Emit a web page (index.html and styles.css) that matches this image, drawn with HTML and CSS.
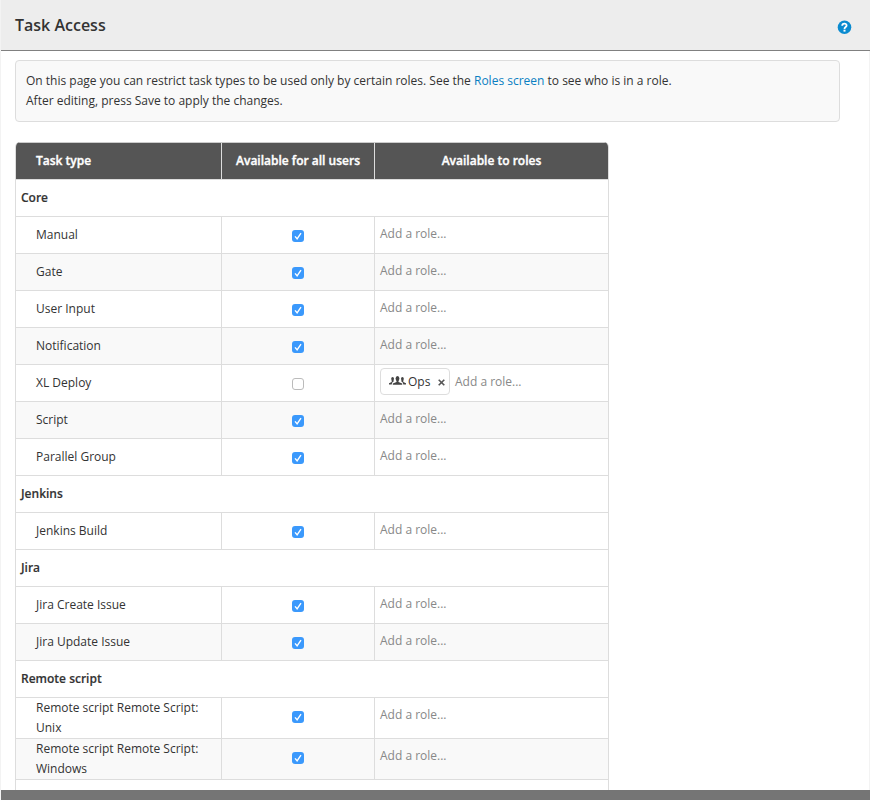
FILE: index.html
```html
<!DOCTYPE html>
<html lang="en">
<head>
<meta charset="utf-8">
<title>Task Access</title>
<link rel="stylesheet" href="styles.css">
</head>
<body>
<div class="page">
  <header class="header">
    <h1>Task Access</h1>
    <svg class="help" viewBox="0 0 15 15"><circle cx="7.5" cy="7.3" r="6.8" fill="#0a8bd0"/><path d="M5.2 5.8C5.2 2.9 9.8 3 9.6 5.6C9.5 7.1 7.5 7 7.5 8.9" fill="none" stroke="#fff" stroke-width="1.8"/><rect x="6.5" y="9.7" width="2" height="1.9" fill="#fff"/></svg>
  </header>
  <main class="content">
    <div class="info"><p>On this page you can restrict task types to be used only by certain roles. See the <a>Roles screen</a> to see who is in a role.</p><p>After editing, press Save to apply the changes.</p></div>
    <div class="table" id="table">
      <div class="row head"><div class="name">Task type</div><div class="all">Available for all users</div><div class="roles">Available to roles</div></div>
    </div>
  </main>
  <footer class="footer"></footer>
</div>
<script src="tasks.js"></script>
</body>
</html>
```
FILE: styles.css
```css
* { box-sizing: border-box; }
body { margin: 0; background: #fff; color: #333; font: 12px/20px "Open Sans", sans-serif; }
.page { height: 800px; display: flex; flex-direction: column; overflow: hidden; border-left: 1px solid #f3f3f3; }
.header { height: 51px; flex: none; display: flex; align-items: center; justify-content: space-between; padding: 2px 18px 0 15px; margin-left: -1px; background: #ededed; border-bottom: 1px solid #808080; }
h1 { margin: 0 0 2px; font-size: 16px; line-height: 22px; font-weight: 600; }
.help { width: 15px; height: 15px; margin-top: 2px; }
.content { flex: 1; min-height: 0; overflow: hidden; padding: 9px 29px 0 14px; border-right: 1px solid #f3f3f3; }
.info { height: 62px; padding: 10px; background: #f9f9f9; border: 1px solid #ddd; border-radius: 4px; }
.info p { margin: 0; white-space: nowrap; }
.info a { color: #0a7fc2; }
.table { width: 594px; margin-top: 20px; border: solid #ddd; border-width: 0 1px; border-radius: 5px 5px 0 0; overflow: hidden; }
.row { display: grid; grid-template-columns: 205px 153px 234px; min-height: 37px; border-top: 1px solid #ddd; }
.row > div { display: flex; align-items: center; }
.name { padding: 0 20px; }
.all, .roles { border-left: 1px solid #ddd; }
.row > .all { justify-content: center; align-items: flex-start; padding-top: 13px; }
.row > .roles { align-items: flex-start; padding: 7px 5px 0; color: #888; }
.row > .restricted { padding-top: 3px; line-height: 27px; }
.head { background: #555; color: #fff; font-weight: 600; border-top-color: #ccc; -webkit-text-stroke: .35px #fff; }
.head > .all, .head > .roles { align-items: center; justify-content: center; color: #fff; padding: 0; }
.even { background: #f9f9f9; }
.group { display: flex; align-items: center; font-weight: 600; padding-left: 5px; -webkit-text-stroke: .15px #333; }
.check { width: 12px; height: 12px; border: 1px solid #bbb; border-radius: 3px; background: #fff; }
.checked { border: 0; background: #3b99fc; }
.check svg { display: block; width: 12px; height: 12px; }
.chip { display: flex; align-items: center; width: 70px; height: 27px; margin-right: 5px; padding-left: 8px; border: 1px solid #ddd; border-radius: 4px; background: #fff; color: #333; }
.people { width: 17px; height: 11px; margin: 0 2px 2px 0; }
.close { width: 7px; height: 7px; margin: 1px 0 0 8px; }
.footer { height: 10px; flex: none; background: #757575; margin-left: -1px; }
```
FILE: tasks.js
```js
const groups = [
  ['Core', ['Manual', 'Gate', 'User Input', 'Notification', 'XL Deploy', 'Script', 'Parallel Group']],
  ['Jenkins', ['Jenkins Build']],
  ['Jira', ['Jira Create Issue', 'Jira Update Issue']],
  ['Remote script', ['Remote script Remote Script: Unix', 'Remote script Remote Script: Windows']],
  ['', []]
];
const checked = '<span class="check checked"><svg viewBox="0 0 12 12"><path d="M3 6.4L5.1 8.8L9 3.2" fill="none" stroke="#fff" stroke-width="1.4"/></svg></span>';
const chip = '<span class="chip"><svg class="people" viewBox="0 0 17 11"><g fill="#444"><ellipse cx="3.6" cy="3.8" rx="1.4" ry="1.9"/><path d="M0 9.5V8.2L2.7 6.9V5H4.5V6.7L3.2 7.6L2.7 9.5Z"/><ellipse cx="13.4" cy="3.8" rx="1.4" ry="1.9"/><path d="M17 9.5V8.2L14.3 6.9V5H12.5V6.7L13.8 7.6L14.3 9.5Z"/><ellipse cx="8.5" cy="3.4" rx="1.9" ry="2.5"/><path d="M3.8 9.7V8.4L7.5 6.9V5H9.5V6.9L13.2 8.4V9.7Z"/></g></svg>Ops<svg class="close" viewBox="0 0 7 7"><path d="M.7 .7L6.3 6.3M6.3 .7L.7 6.3" stroke="#555" stroke-width="1.6"/></svg></span>';
let html = '';
for (const [title, tasks] of groups) {
  html += `<div class="row group">${title}</div>`;
  tasks.forEach((task, i) => {
    const restricted = task === 'XL Deploy';
    html += `<div class="row ${i % 2 ? 'even' : ''}"><div class="name">${task}</div><div class="all">${restricted ? '<span class="check"></span>' : checked}</div><div class="roles ${restricted ? 'restricted' : ''}">${restricted ? chip : ''}Add a role...</div></div>`;
  });
}
document.getElementById('table').insertAdjacentHTML('beforeend', html);
```
